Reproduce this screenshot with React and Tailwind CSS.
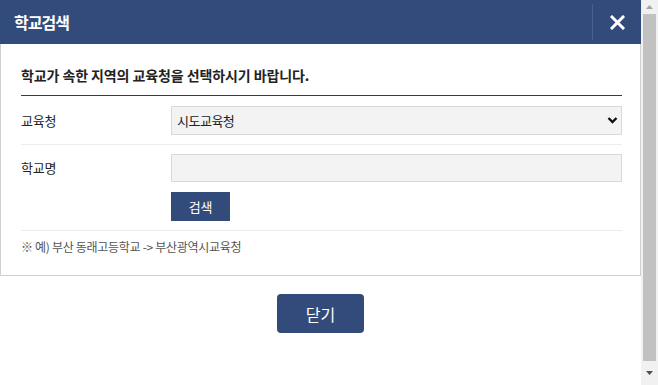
import React from "react";

const font = { fontFamily: '"Noto Sans CJK KR", "Noto Sans", sans-serif' };

const App = () => {
  return (
    <div className="flex w-[658px] h-[385px] bg-white overflow-hidden" style={font}>
      <div className="w-[641px] flex flex-col">
        {/* header */}
        <div className="h-[44px] bg-[#334b7a] flex items-center justify-between pl-[14px]">
          <h1 className="text-white text-[16px] font-bold tracking-[-1px]">학교검색</h1>
          <div className="h-full py-[4px] flex">
            <div className="border-l border-[#4a5f8a] w-[49px] flex items-center justify-center">
              <svg width="15" height="15" viewBox="0 0 15 15">
                <path d="M2 2 L13 13 M13 2 L2 13" stroke="#fff" strokeWidth="3" strokeLinecap="square" />
              </svg>
            </div>
          </div>
        </div>

        {/* body */}
        <div className="border-x border-b border-[#cfcfcf] pl-[20px] pr-[18px] pb-[20px]">
          <div className="pt-[21px] pb-[10px] border-b border-[#333d50] leading-[20px] text-[14px] font-bold text-[#222] tracking-[-0.1px]">
            학교가 속한 지역의 교육청을 선택하시기 바랍니다.
          </div>

          <div className="flex items-center pt-[10px] pb-[9px] border-b border-[#ececec]">
            <span className="w-[150px] text-[13px] text-[#222] tracking-[-0.2px]">교육청</span>
            <div className="relative flex-1">
              <select className="appearance-none w-full h-[29px] bg-[#f3f3f3] border border-[#d9d9d9] pl-[5px] text-[13px] text-[#222] tracking-[-0.5px] outline-none">
                <option>시도교육청</option>
              </select>
              <svg className="absolute right-[4px] top-[10px]" width="11" height="9" viewBox="0 0 11 9">
                <path d="M1.5 2 L5.5 6 L9.5 2" stroke="#111" strokeWidth="2.4" fill="none" />
              </svg>
            </div>
          </div>

          <div className="flex pt-[9px] pb-[9px] border-b border-[#ececec]">
            <span className="w-[150px] text-[13px] text-[#222] tracking-[-0.2px] leading-[28px]">학교명</span>
            <div className="flex-1 flex flex-col items-start gap-[10px]">
              <input className="w-full h-[28px] bg-[#f3f3f3] border border-[#d9d9d9] outline-none" />
              <button className="w-[59px] h-[29px] bg-[#334b7a] text-white text-[13px] tracking-[-0.3px]">검색</button>
            </div>
          </div>

          <p className="pt-[8px] leading-[16px] text-[12px] text-[#555] tracking-[-0.3px]">
            ※ 예) 부산 동래고등학교 -&gt; 부산광역시교육청
          </p>
        </div>

        <div className="flex justify-center pt-[18px]">
          <button className="w-[87px] h-[39px] rounded-[4px] bg-[#334b7a] text-white text-[16px]">닫기</button>
        </div>
      </div>

      {/* scrollbar */}
      <div className="w-[17px] h-full bg-[#f1f1f1] flex flex-col items-center">
        <div className="h-[14px] flex items-center justify-center">
          <svg width="7" height="4" viewBox="0 0 7 4"><path d="M0 4 L3.5 0 L7 4 Z" fill="#a3a3a3" /></svg>
        </div>
        <div className="w-[13px] flex-1 bg-[#c1c1c1]" />
        <div className="h-[24px] flex items-center justify-center">
          <svg width="7" height="4" viewBox="0 0 7 4"><path d="M0 0 L7 0 L3.5 4 Z" fill="#505050" /></svg>
        </div>
      </div>
    </div>
  );
};

export default App;
